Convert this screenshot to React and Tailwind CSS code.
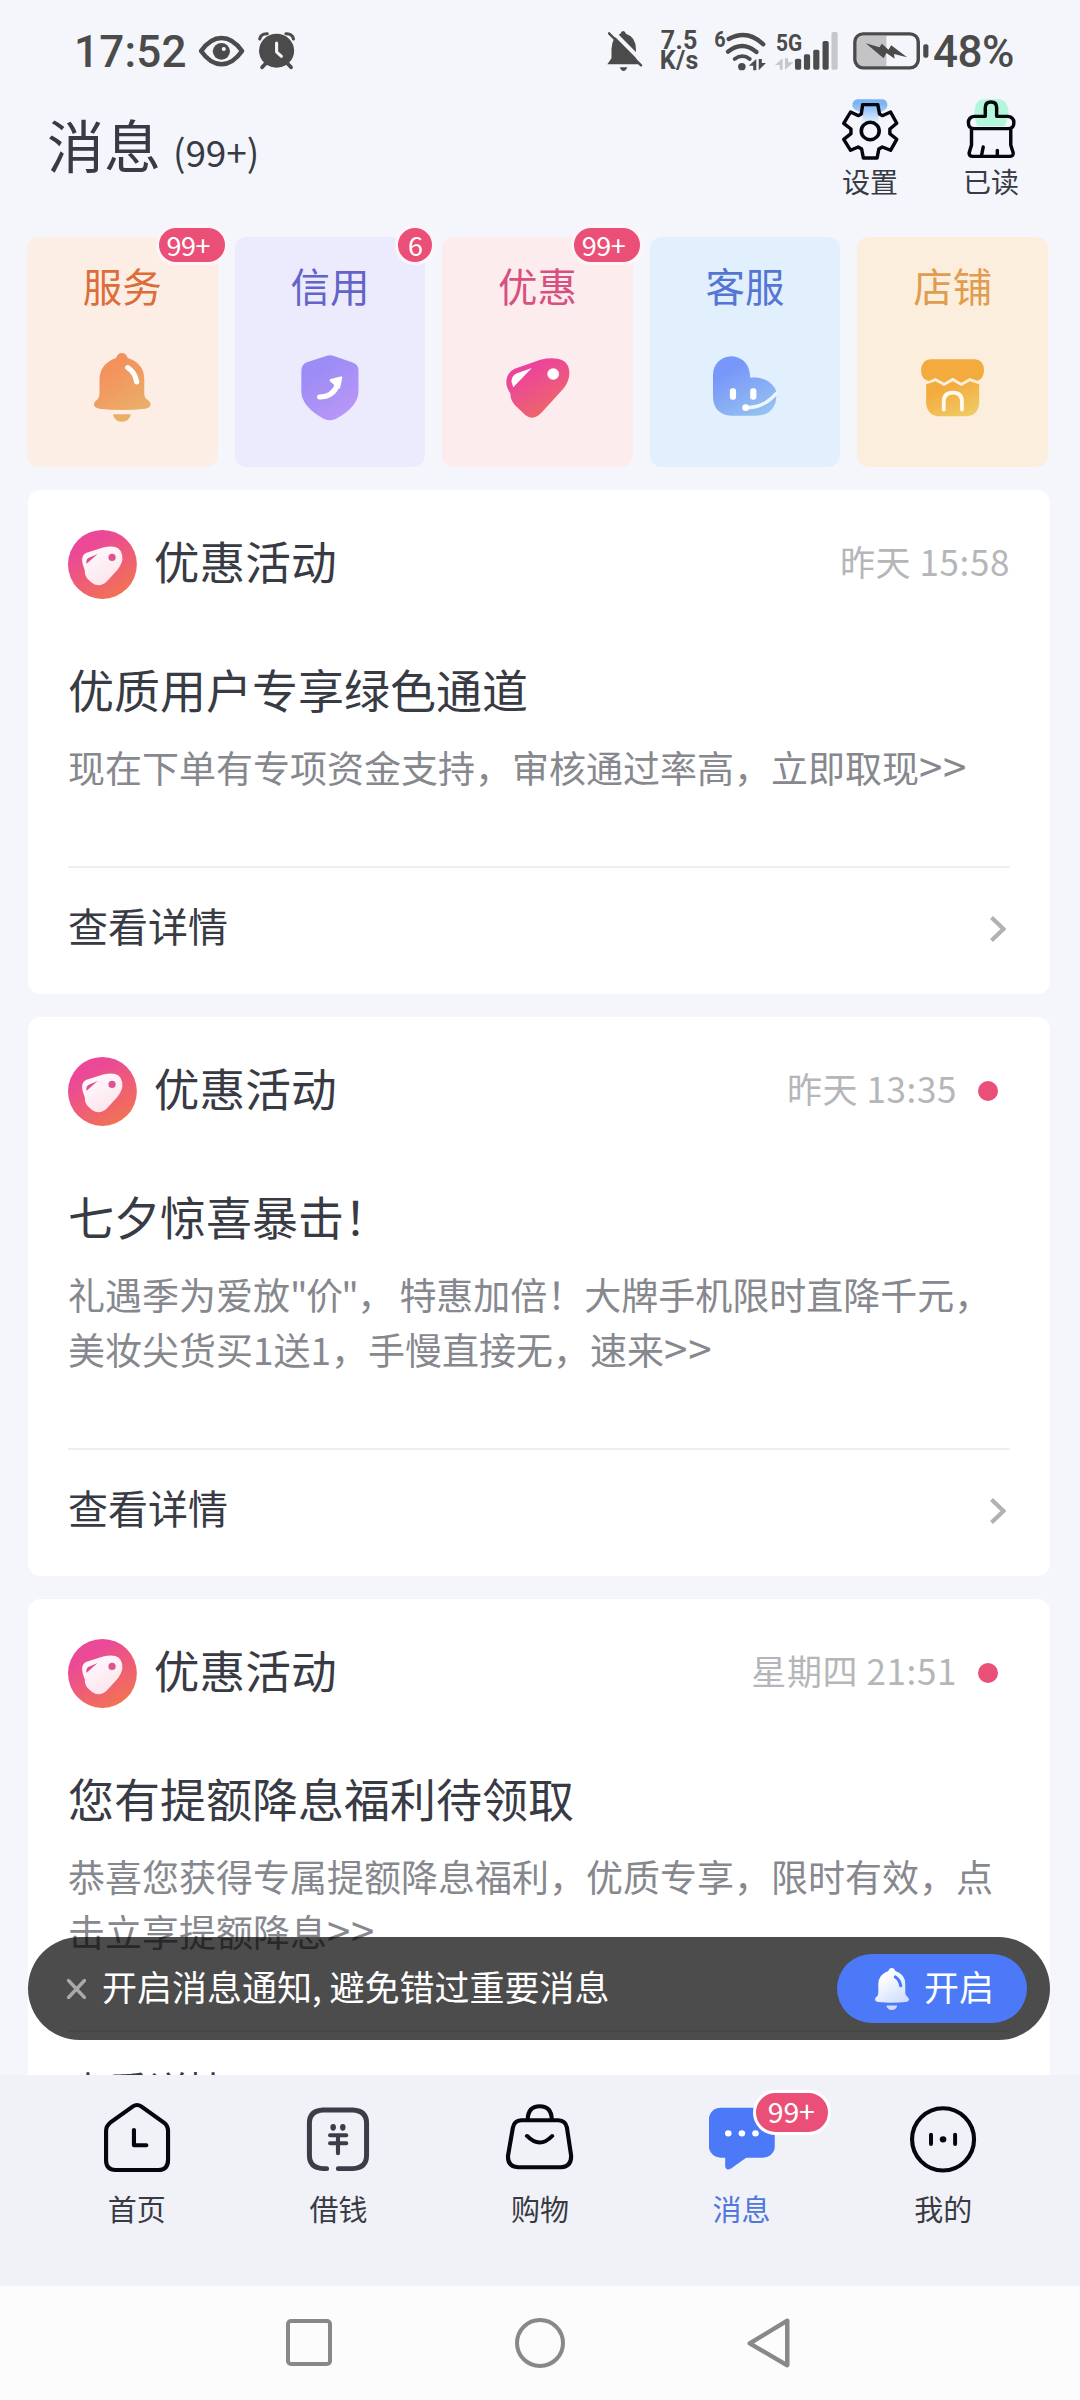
import React from "react";

const INK = "#05070f";
const STATUS = "#4b4b4b";
const PAGE = "#f4f6fb";

/* Drawing surface: icon art is authored on a grid of about 3 units per pixel. */
function Art({ x, y, w, h, sy = 3, className = "", children }) {
  return (
    <svg
      className={"block shrink-0 overflow-visible " + className}
      width={w / 2.904}
      height={h / sy}
      viewBox={`${x} ${y} ${w} ${h}`}
      preserveAspectRatio="none"
      fill="none"
      strokeLinecap="round"
      strokeLinejoin="round"
    >
      {children}
    </svg>
  );
}

function Grad({ id, from, to, x1 = "0.2", y1 = "0", x2 = "0.8", y2 = "1" }) {
  return (
    <defs>
      <linearGradient id={id} x1={x1} y1={y1} x2={x2} y2={y2}>
        <stop offset="0.2" stopColor={from} />
        <stop offset="1" stopColor={to} />
      </linearGradient>
    </defs>
  );
}

/* ---------- status bar ---------- */

function StatusBar() {
  return (
    <div className="flex h-[102px] shrink-0 items-center pl-[74px] pr-[66px] font-['Roboto',sans-serif] text-[#4b4b4b]">
      <div className="mt-[2px] w-[125px] whitespace-nowrap text-[44px] font-medium leading-none tracking-[0.2px]">17:52</div>
      <Art x={578} y={98} w={132} h={112}>
        <path d="M584 155C620 103 667 103 703 155C667 208 620 208 584 155Z" stroke={STATUS} strokeWidth="13" />
        <circle cx="643" cy="156" r="25" fill={STATUS} />
        <circle cx="650" cy="149" r="6" fill={PAGE} />
      </Art>
      <Art x={752} y={98} w={108} h={112} className="ml-[14px]">
        <circle cx="806" cy="154" r="51" fill={STATUS} />
        <path d="M757 119Q760 102 779 103M833 103Q852 102 855 119" stroke={STATUS} strokeWidth="9" />
        <path d="M775 192L764 204M837 192L848 204" stroke={STATUS} strokeWidth="11" />
        <path d="M806 131V158L820 171" stroke={PAGE} strokeWidth="9" />
      </Art>

      <div className="ml-auto flex items-center">
        <Art x={191} y={96} w={102} h={120}>
          <path
            d="M238 96Q244 96 246 104Q275 114 275 150V178L285 196H192L204 178V150Q206 112 230 104Q232 96 238 96Z"
            fill={STATUS}
          />
          <path d="M228 205H250Q246 216 239 216Q232 216 228 205Z" fill={STATUS} />
          <path d="M203 93L300 194" stroke={PAGE} strokeWidth="12" />
          <path d="M197 103L290 199" stroke={STATUS} strokeWidth="7" />
        </Art>
        <div className="ml-[17px] mr-[2px] flex w-[40px] flex-col items-center text-[25px] font-bold leading-[20px] tracking-[0.3px]">
          <span>7.5</span>
          <span>K/s</span>
        </div>
        <Art x={508} y={90} w={150} h={122} className="ml-[14px]">
          <text x="506" y="139" fontSize="67" fontWeight="700" fill={STATUS} textLength="33" lengthAdjust="spacingAndGlyphs">6</text>
          <path d="M548 114Q602 84 648 130M546 152Q588 118 628 153" stroke={STATUS} strokeWidth="13" />
          <path d="M565 174Q588 157 609 174" stroke={STATUS} strokeWidth="11" />
          <circle cx="586" cy="197" r="11" fill={STATUS} />
          <path d="M628 174V208H619V194H606ZM635 208V174H644V186H656Z" fill={STATUS} />
        </Art>
        <Art x={684} y={95} w={182} h={115} className="ml-[8px]">
          <text x="687" y="151" fontSize="74" fontWeight="700" fill={STATUS} textLength="76" lengthAdjust="spacingAndGlyphs">5G</text>
          <path d="M706 174V208H698V194H684ZM713 208V174H722V186H738Z" fill="#c6c7ca" />
          <rect x="742" y="175" width="18" height="33" rx="5" fill={STATUS} />
          <rect x="768" y="162" width="18" height="46" rx="5" fill={STATUS} />
          <rect x="795" y="148" width="18" height="60" rx="5" fill={STATUS} />
          <rect x="822" y="122" width="18" height="86" rx="5" fill={STATUS} />
          <rect x="848" y="95" width="18" height="113" rx="5" fill="#c6c7ca" />
        </Art>
        <Art x={911} y={95} w={219} h={113} className="ml-[15px]">
          <path d="M1008 106H942Q922 106 922 126V178Q922 198 942 198H1008Z" fill="#c4c4c6" />
          <rect x="916.5" y="100.500" width="184" height="102" rx="24" stroke={STATUS} strokeWidth="10" />
          <path d="M948 129L988 141L995 130L1014 148L1022 135L1068 171L1030 161L1032 175L1008 158L1000 174Z" fill={STATUS} />
          <rect x="1115" y="132" width="15" height="40" rx="6" fill={STATUS} />
        </Art>
        <div className="ml-[5px] mt-[2px] w-[81px] whitespace-nowrap text-[44px] font-medium leading-none tracking-[-0.500px]">48%</div>
      </div>
    </div>
  );
}

/* ---------- page header ---------- */

function GearIcon() {
  return (
    <Art x={878} y={298} w={164} h={184}>
      <Grad id="gearTint" from="#7db3f3" to="#dcebfc" x1="0.5" x2="0.5" />
      <path
        d="M922 299H997Q1010 301 1010 318Q1008 334 984 338V364H938V338Q910 334 908 318Q908 301 922 299Z"
        fill="url(#gearTint)"
      />
      <path
        d="M938 315H982L987 343L995 348L1019 337L1037 371L1017 388V402L1037 419L1019 452L995 442L985 448L980 475H940L935 448L925 442L903 452L883 419L904 402V388L883 371L903 337L926 348L934 343Z"
        stroke={INK}
        strokeWidth="10"
      />
      <circle cx="960" cy="394" r="26" stroke={INK} strokeWidth="10.500" />
    </Art>
  );
}

function BrushIcon() {
  return (
    <Art x={1238} y={298} w={146} h={184}>
      <path d="M1262 348Q1262 299 1290 299H1335Q1362 302 1362 348L1350 380H1270Z" fill="#b4f5dc" />
      <path
        d="M1294 350V324Q1294 307 1310.500 307Q1327 307 1327 324V350H1360Q1377 352 1377 369Q1377 387 1360 387H1262Q1245 387 1245 369Q1245 352 1262 350Z"
        stroke={INK}
        strokeWidth="10"
      />
      <path
        d="M1254 390V436L1247 460Q1247 470 1257 470H1366Q1377 469 1375 459L1368 436V390M1288 442L1283 468M1329 452V468"
        stroke={INK}
        strokeWidth="10"
      />
    </Art>
  );
}

function Header() {
  return (
    <header className="flex h-[135px] shrink-0 justify-between pl-[47px] pr-[61px] text-[#383a45]">
      <div className="flex items-baseline pt-[11px] leading-[60px]">
        <h1 className="text-[57px] font-normal">消息</h1>
        <span className="relative -top-px ml-[12px] text-[37px] font-normal tracking-[-0.100px]">(99+)</span>
      </div>
      <div className="flex gap-[64px]">
        <div className="-mt-[3px] flex w-[58px] flex-col items-center">
          <GearIcon />
          <span className="mt-[5px] whitespace-nowrap text-[28px] leading-[32px]">设置</span>
        </div>
        <div className="-mt-[3px] flex w-[56px] flex-col items-center">
          <BrushIcon />
          <span className="mt-[5px] whitespace-nowrap text-[28px] leading-[32px]">已读</span>
        </div>
      </div>
    </header>
  );
}

/* ---------- categories ---------- */

function BellIcon({ id, from, to, shine }) {
  return (
    <>
      <Grad id={id} from={from} to={to} />
      <path
        d="M354 413Q366 413 371 428Q419 444 419 492V536Q420 550 430 555Q438 560 437 570Q435 578 422 580Q355 588 288 580Q274 577 273 569Q273 558 282 553Q289 548 289 536V492Q290 445 337 428Q342 413 354 413Z"
        fill={`url(#${id})`}
      />
      <path d="M328 597H380Q376 619 354 619Q332 619 328 597Z" fill={to} />
      <path d="M371 457Q392 470 397 500" stroke={shine} strokeWidth="15" />
    </>
  );
}

function ServiceIcon() {
  return (
    <Art x={273} y={413} w={164} h={206}>
      <BellIcon id="bellOrange" from="#f4905c" to="#eaae68" shine="#ffffff" />
    </Art>
  );
}

function CreditIcon() {
  return (
    <Art x={873} y={413} w={168} h={206}>
      <Grad id="shieldViolet" from="#9c8cf6" to="#bb98f6" />
      <path
        d="M948 421Q957 418 966 421L1025 442Q1040 449 1040 464V530Q1038 575 974 611Q957 619 940 611Q876 575 874 530V464Q875 448 890 441Z"
        fill="url(#shieldViolet)"
      />
      <path d="M927 545Q966 545 979 508" stroke="#fff" strokeWidth="15" />
      <path d="M960 495L989 487L983 516Z" fill="#fff" stroke="#fff" strokeWidth="8" />
    </Art>
  );
}

function DiscountIcon() {
  return (
    <Art x={1465} y={413} w={184} h={206}>
      <Grad id="tagPink" from="#ec449c" to="#ee6c60" />
      <path
        d="M1490 460L1565 433Q1590 427 1615 430Q1649 436 1649 475Q1648 500 1630 522L1572 588Q1545 620 1520 598L1490 568Q1477 552 1478 535Q1465 515 1466 498Q1468 470 1490 460Z"
        fill="url(#tagPink)"
      />
      <circle cx="1602" cy="476" r="17" fill="#fff" />
      <path d="M1540 458L1497 474Q1480 482 1481 500L1486 516Z" fill="#fff" />
    </Art>
  );
}

function SupportIcon() {
  return (
    <Art x={502} y={413} w={184} h={206}>
      <Grad id="heartBlue" from="#7897fa" to="#96c2ef" />
      <path
        d="M556 423C590 425 610 450 610 487C640 484 665 492 683 520Q688 535 684 560C676 588 655 601 628 601H556C522 600 503 580 502 546V478C503 446 524 424 556 423Z"
        fill="url(#heartBlue)"
      />
      <rect x="551" y="519" width="18" height="34" rx="8" fill="#fff" />
      <rect x="610" y="519" width="18" height="34" rx="8" fill="#fff" />
      <path d="M597 577Q650 578 685 535" stroke="#eef6ff" strokeWidth="10" />
      <circle cx="597" cy="577" r="10" fill="#fff" />
    </Art>
  );
}

function ShopIcon() {
  return (
    <Art x={1103} y={413} w={183} h={206}>
      <Grad id="shopGold" from="#f3ab3d" to="#efcb66" />
      <path
        d="M1130 432H1260Q1286 434 1286 466Q1284 492 1266 496L1245 488L1220 502L1195 487L1170 502L1145 488L1126 497Q1104 492 1103 466Q1104 434 1130 432Z"
        fill="#f3ab3d"
      />
      <path
        d="M1118 507L1145 498L1170 512L1195 498L1220 512L1245 498L1272 507V565Q1268 603 1230 603H1160Q1122 603 1118 565Z"
        fill="url(#shopGold)"
      />
      <path d="M1169 583V560Q1169 532 1196 532Q1222 532 1222 560V583" stroke="#fffaf0" strokeWidth="11" />
    </Art>
  );
}

const CATEGORIES = [
  { name: "服务", badge: "99+", tone: "bg-[#fceee5] text-[#dc6d38]", Icon: ServiceIcon },
  { name: "信用", badge: "6", tone: "bg-[#ecebfd] text-[#6363c8]", Icon: CreditIcon },
  { name: "优惠", badge: "99+", tone: "bg-[#fcecee] text-[#d8507f]", Icon: DiscountIcon },
  { name: "客服", tone: "bg-[#e2effd] text-[#5476d2]", Icon: SupportIcon },
  { name: "店铺", tone: "bg-[#fceedc] text-[#e09c50]", Icon: ShopIcon },
];

function Categories() {
  return (
    <nav className="grid h-[230px] shrink-0 grid-cols-5 gap-[17px] pl-[27px] pr-[32px]">
      {CATEGORIES.map(({ name, badge, tone, Icon }) => (
        <div key={name} className={"relative flex flex-col items-center rounded-[12px] " + tone}>
          <span className="mt-[26px] text-[39.500px] leading-[44px]">{name}</span>
          <div className="mt-[46px]">
            <Icon />
          </div>
          {badge && (
            <span
              className={
                "absolute -right-[10px] -top-[12px] flex h-[40px] items-center rounded-full border-[3px] border-[#fdf5f8] bg-[#ea4f78] pb-[2px] text-[27px] font-normal leading-none tracking-[-0.5px] text-white " +
                (badge.length > 1 ? "w-[72px] pl-[8px]" : "w-[40px] justify-center")
              }
            >
              {badge}
            </span>
          )}
        </div>
      ))}
    </nav>
  );
}

/* ---------- messages ---------- */

function PromoAvatar({ id }) {
  return (
    <Art x={198} y={149} w={200} h={204} sy={2.958}>
      <Grad id={id + "bg"} from="#eb4898" to="#f2764e" />
      <Grad id={id + "fg"} from="#fff5fb" to="#fbe3ea" />
      <ellipse cx="298" cy="251" rx="100" ry="102" fill={`url(#${id}bg)`} />
      <path
        d="M252 216L300 201Q320 196 335 199Q357 205 356 236Q354 250 340 269L312 300Q290 322 268 306L255 294Q246 283 247 269Q238 246 239 235Q240 221 252 216Z"
        fill={`url(#${id}fg)`}
      />
      <circle cx="326" cy="230" r="10.500" fill="#dd5590" />
      <path d="M284 220L257 232Q249 238 252 249Z" fill="#d9508f" />
    </Art>
  );
}

const MESSAGES = [
  {
    time: "昨天 15:58",
    title: "优质用户专享绿色通道",
    lines: [{ text: "现在下单有专项资金支持，审核通过率高，立即取现", arrows: ">>" }],
  },
  {
    time: "昨天 13:35",
    unread: true,
    title: "七夕惊喜暴击！",
    lines: [
      { text: "礼遇季为爱放", quoted: "\"价\"， ", rest: "特惠加倍！大牌手机限时直降千元，" },
      { text: "美妆尖货买1送1，手慢直接无，速来", arrows: ">>" },
    ],
  },
  {
    time: "星期四 21:51",
    unread: true,
    title: "您有提额降息福利待领取",
    lines: [
      { text: "恭喜您获得专属提额降息福利，优质专享，限时有效，点" },
      { text: "击立享提额降息", arrows: ">>" },
    ],
  },
];

function MessageCard({ message, index }) {
  return (
    <article className="shrink-0 rounded-[13px] bg-white px-[40px] pb-[24px] pt-[40px] text-[#383a44]">
      <div className="flex h-[69px] items-center">
        <PromoAvatar id={"promo" + index} />
        <span className="ml-[17px] -mt-[8px] text-[45.700px] leading-[50px]">优惠活动</span>
        <span className="-mt-[6px] ml-auto whitespace-pre text-[35px] font-normal leading-[40px] tracking-[0.600px] text-[#b5b6b9]">
          {message.time}
        </span>
        {message.unread && <span className="ml-[21px] mr-[12px] size-[20px] rounded-full bg-[#ea4f78]" />}
      </div>
      <h2 className="mt-[62px] whitespace-nowrap text-[46px] font-normal leading-[54px]">{message.title}</h2>
      <div className="mt-[25px] whitespace-pre text-[37px] font-normal leading-[55px] text-[#86888e]">
        {message.lines.map(({ text, quoted, rest, arrows }) => (
          <div key={text} className="h-[55px]">
            {text}
            {quoted && <span className="tracking-[-1.600px]">{quoted}</span>}
            {rest}
            {arrows && <span className="text-[42px] leading-none tracking-[0.800px]">{arrows}</span>}
          </div>
        ))}
      </div>
      <div className="mt-[71px] flex h-[104.500px] items-center justify-between border-t-2 border-[#efeff1] pt-[12px]">
        <span className="text-[40px] leading-[48px]">查看详情</span>
        <svg className="mr-[4px] mt-[9px]" width="16" height="26" viewBox="0 0 16 26" fill="none" stroke="#b2b2b5" strokeWidth="4.200">
          <path d="M1.500 1.500L13.500 13L1.500 24.500" />
        </svg>
      </div>
    </article>
  );
}

function NoticeBar() {
  return (
    <div className="absolute bottom-[35px] left-[28px] right-[30px] flex h-[103px] items-center rounded-full bg-black/70 pl-[39px] pr-[23px] text-white">
      <svg width="19" height="20" viewBox="0 0 19 20" fill="none" stroke="#a9a9a9" strokeWidth="3.400" strokeLinecap="round">
        <path d="M1.500 1.500L17.500 18.500M17.500 1.500L1.500 18.500" />
      </svg>
      <span className="-mt-[6px] ml-[16px] whitespace-nowrap text-[35px] leading-[48px]">开启消息通知, 避免错过重要消息</span>
      <button className="ml-auto flex h-[69px] w-[190px] items-center rounded-full bg-[#4b79f7] pl-[38px]">
        <svg width="34" height="42" viewBox="273 413 164 206" preserveAspectRatio="none" fill="none" strokeLinecap="round">
          <BellIcon id="bellWhite" from="#ffffff" to="#cfdcfd" shine="#4b79f7" />
        </svg>
        <span className="-mt-[6px] ml-[15px] text-[35px] leading-[48px]">开启</span>
      </button>
    </div>
  );
}

/* ---------- bottom tabs ---------- */

function HomeTabIcon() {
  return (
    <Art x={302} y={98} w={192} h={208}>
      <path
        d="M386 108Q398 100 410 108L476 157Q488 166 488 182V268Q488 299 460 299H336Q308 299 308 270V182Q308 167 320 157Z"
        stroke={INK}
        strokeWidth="12"
      />
      <path d="M389 179V225H425" stroke={INK} strokeWidth="12" />
    </Art>
  );
}

function BorrowTabIcon() {
  return (
    <Art x={891} y={98} w={180} h={208}>
      <path
        d="M948 295H938Q898 293 898 255V159Q898 121 938 119H1024Q1064 121 1064 159V255Q1064 293 1024 295H982"
        stroke="#3b3d48"
        strokeWidth="14.500"
      />
      <ellipse cx="967" cy="171" rx="8" ry="10" fill="#3b3d48" />
      <ellipse cx="995" cy="171" rx="8" ry="10" fill="#3b3d48" />
      <path d="M958 195H1005M958 219H1005M981 197V249" stroke="#3b3d48" strokeWidth="12" />
    </Art>
  );
}

function ShoppingTabIcon() {
  return (
    <Art x={1468} y={98} w={196} h={208}>
      <path
        d="M1531 148Q1532 108 1566 108Q1600 108 1601 148M1512 150H1620Q1641 151 1645 172L1657 255Q1659 288 1628 291H1503Q1471 288 1474 255L1488 172Q1492 151 1512 150ZM1529 197Q1566 236 1602 197"
        stroke={INK}
        strokeWidth="12"
      />
    </Art>
  );
}

function MessageTabIcon() {
  return (
    <Art x={488} y={98} w={191} h={208}>
      <rect x="488" y="112" width="191" height="150" rx="34" fill="#4b79f7" />
      <path d="M535 255V288Q537 302 551 295L598 261V255Z" fill="#4b79f7" />
      <circle cx="544" cy="189" r="9.500" fill="#fff" />
      <circle cx="583.500" cy="189" r="9.500" fill="#fff" />
      <circle cx="623" cy="189" r="9.500" fill="#fff" />
    </Art>
  );
}

function ProfileTabIcon() {
  return (
    <Art x={1074} y={98} w={192} h={208}>
      <ellipse cx="1170" cy="207" rx="90" ry="93.500" stroke={INK} strokeWidth="12" />
      <path d="M1135 193V221M1205 193V221" stroke={INK} strokeWidth="11.500" />
      <circle cx="1170" cy="207" r="9.500" fill={INK} />
    </Art>
  );
}

const TABS = [
  { name: "首页", Icon: HomeTabIcon },
  { name: "借钱", Icon: BorrowTabIcon },
  { name: "购物", Icon: ShoppingTabIcon },
  { name: "消息", Icon: MessageTabIcon, active: true, badge: "99+" },
  { name: "我的", Icon: ProfileTabIcon },
];

function TabBar() {
  return (
    <nav className="grid h-[211px] shrink-0 grid-cols-5 bg-[#f1f2f8] px-[36px] pt-[28px]">
      {TABS.map(({ name, Icon, active, badge }) => (
        <div key={name} className="relative flex flex-col items-center">
          <Icon />
          <span className={"mt-[16px] text-[29px] leading-[40px] " + (active ? "text-[#4f77dc]" : "text-[#383a44]")}>
            {name}
          </span>
          {badge && (
            <span className="absolute -top-[13px] left-[112px] flex h-[45px] w-[78px] items-center justify-center rounded-full border-[3px] border-white bg-[#ea4f78] pb-[3px] pr-px text-[28.500px] font-normal leading-none tracking-[-0.2px] text-white">
              {badge}
            </span>
          )}
        </div>
      ))}
    </nav>
  );
}

function SystemNav() {
  return (
    <div className="flex h-[114px] shrink-0 items-center bg-[#fcfcfc] pb-px pl-[286px]">
      <div className="h-[47px] w-[46px] rounded-[5px] border-4 border-[#888888]" />
      <div className="ml-[183px] size-[50px] rounded-full border-4 border-[#888888]" />
      <Art x={601} y={743} w={125} h={150} className="ml-[182px]">
        <path d="M718 751V885L609 819Z" stroke="#888888" strokeWidth="13" />
      </Art>
    </div>
  );
}

export default function App() {
  return (
    <div className="flex h-[2400px] w-[1080px] flex-col overflow-hidden bg-[#f4f6fb] font-['Noto_Sans_CJK_SC',sans-serif]">
      <StatusBar />
      <Header />
      <Categories />
      <main className="relative min-h-0 flex-1 overflow-hidden pl-[28px] pr-[30px] pt-[22.500px]">
        <div className="flex flex-col gap-[22.500px]">
          {MESSAGES.map((message, index) => (
            <MessageCard key={message.title} message={message} index={index} />
          ))}
        </div>
        <NoticeBar />
      </main>
      <TabBar />
      <SystemNav />
    </div>
  );
}
